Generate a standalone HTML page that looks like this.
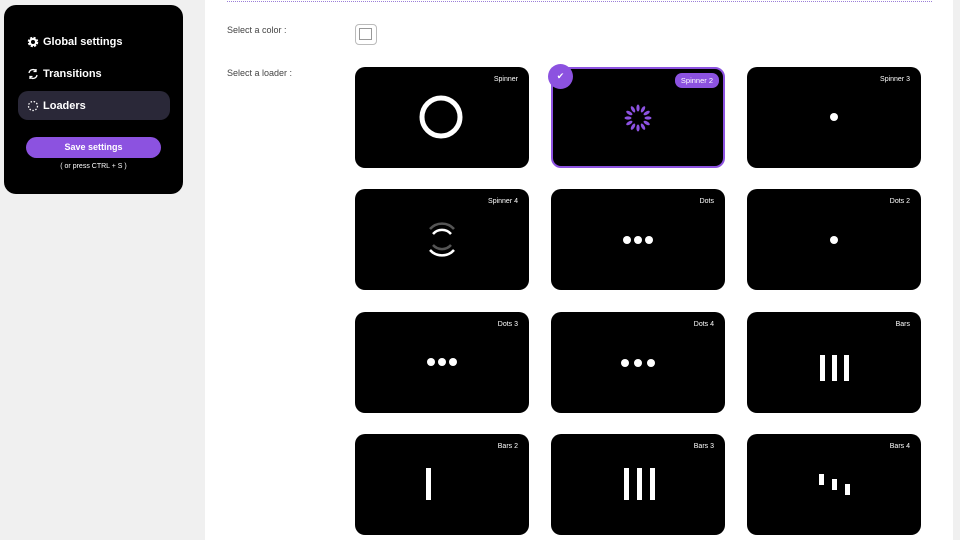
<!DOCTYPE html>
<html><head><meta charset="utf-8"><style>
*{margin:0;padding:0;box-sizing:border-box}
body{width:960px;height:540px;background:#f0f0f0;font-family:"Liberation Sans",sans-serif;position:relative;overflow:hidden}
.side{position:absolute;left:4px;top:5px;width:179px;height:189px;background:#000;border-radius:12px;color:#fff}
.item{position:absolute;left:14px;width:152px;height:29px;border-radius:10px;font-weight:bold;font-size:11px;line-height:30px;padding-left:25px}
.item svg{position:absolute;left:9px;top:9px}
.sel{background:#2a2838}
.btn{position:absolute;left:22px;top:132px;width:135px;height:21px;border-radius:11px;background:#8c52e0;font-size:9px;font-weight:bold;text-align:center;line-height:21px}
.hint{position:absolute;left:0;width:179px;top:158px;text-align:center;font-size:7px}
.main{position:absolute;left:205px;top:0;width:748px;height:540px;background:#fff}
.dl{position:absolute;left:22px;top:1px;width:705px;border-top:1px dotted #9b7fd8}
.lbl{position:absolute;left:22px;font-size:9px;color:#444}
.sw{position:absolute;left:150px;top:24px;width:22px;height:21px;border:1.5px solid #bbb;border-radius:4px}
.sw div{position:absolute;left:3px;top:3px;width:13px;height:12px;border:1px solid #999}
.card{position:absolute;width:174px;height:101px;background:#000;border-radius:10px}
.t{position:absolute;right:11px;top:9px;font-size:7px;color:#fff}
.c{position:absolute;left:0;top:0}
</style></head><body>
<div class="side">
 <div class="item" style="top:22px"><svg width="12" height="12" viewBox="0 0 12 12"><circle cx="6" cy="6" r="4" fill="none" stroke="#fff" stroke-width="2.5" stroke-dasharray="2 1.2"/><circle cx="6" cy="6" r="3" fill="none" stroke="#fff" stroke-width="2"/></svg>Global settings</div>
 <div class="item" style="top:54px"><svg width="12" height="12" viewBox="0 0 12 12" fill="none" stroke="#fff" stroke-width="1.3"><path d="M2 5a4 4 0 0 1 7-2M10 7a4 4 0 0 1-7 2"/><path d="M9 1v2.5H6.5M3 11V8.5h2.5"/></svg>Transitions</div>
 <div class="item sel" style="top:86px"><svg width="12" height="12" viewBox="0 0 12 12" fill="none" stroke="#fff" stroke-width="1.3" stroke-dasharray="1.5 1.6"><circle cx="6" cy="6" r="4.5"/></svg>Loaders</div>
 <div class="btn">Save settings</div>
 <div class="hint">( or press CTRL + S )</div>
</div>
<div class="main">
 <div class="dl"></div>
 <div class="lbl" style="top:25px">Select a color :</div>
 <div class="sw"><div></div></div>
 <div class="lbl" style="top:68px">Select a loader :</div>

 <div class="card" style="left:150px;top:67px"><span class="t">Spinner</span><svg class="c" width="174" height="101"><circle cx="86" cy="50" r="19" fill="none" stroke="#fff" stroke-width="5"/></svg></div>
 <div class="card" style="left:346px;top:67px;border:2.5px solid #8c52e0"><span style="position:absolute;right:4px;top:4px;background:#8c52e0;color:#fff;font-size:7.5px;padding:3px 6px;border-radius:7px">Spinner 2</span><svg class="c" width="170" height="97" style="left:-1px;top:-3px"><g fill="#8c52e0" transform="translate(86,52)"><ellipse rx="1.6" ry="3.5" cy="-10"/><ellipse rx="1.6" ry="3.5" cy="-10" transform="rotate(30)"/><ellipse rx="1.6" ry="3.5" cy="-10" transform="rotate(60)"/><ellipse rx="1.6" ry="3.5" cy="-10" transform="rotate(90)"/><ellipse rx="1.6" ry="3.5" cy="-10" transform="rotate(120)"/><ellipse rx="1.6" ry="3.5" cy="-10" transform="rotate(150)"/><ellipse rx="1.6" ry="3.5" cy="-10" transform="rotate(180)"/><ellipse rx="1.6" ry="3.5" cy="-10" transform="rotate(210)"/><ellipse rx="1.6" ry="3.5" cy="-10" transform="rotate(240)"/><ellipse rx="1.6" ry="3.5" cy="-10" transform="rotate(270)"/><ellipse rx="1.6" ry="3.5" cy="-10" transform="rotate(300)"/><ellipse rx="1.6" ry="3.5" cy="-10" transform="rotate(330)"/></g></svg></div>
 <div style="position:absolute;left:343px;top:64px;width:25px;height:25px;border-radius:50%;background:#8c52e0;color:#fff;font-size:9px;text-align:center;line-height:25px">✔</div>
 <div class="card" style="left:542px;top:67px"><span class="t">Spinner 3</span><svg class="c" width="174" height="101"><circle cx="87" cy="50" r="4" fill="#fff"/></svg></div>

 <div class="card" style="left:150px;top:189px"><span class="t">Spinner 4</span><svg class="c" width="174" height="101" fill="none" stroke-width="2.5"><path d="M75 40a16 16 0 0 1 24 0" stroke="#555"/><path d="M78 45a12 12 0 0 1 18 0" stroke="#fff"/><path d="M78 56a12 12 0 0 0 18 0" stroke="#555"/><path d="M75 61a16 16 0 0 0 24 0" stroke="#fff"/></svg></div>
 <div class="card" style="left:346px;top:189px"><span class="t">Dots</span><svg class="c" width="174" height="101"><g fill="#fff"><circle cx="76" cy="51" r="4"/><circle cx="87" cy="51" r="4"/><circle cx="98" cy="51" r="4"/></g></svg></div>
 <div class="card" style="left:542px;top:189px"><span class="t">Dots 2</span><svg class="c" width="174" height="101"><circle cx="87" cy="51" r="4" fill="#fff"/></svg></div>

 <div class="card" style="left:150px;top:312px"><span class="t">Dots 3</span><svg class="c" width="174" height="101"><g fill="#fff"><circle cx="76" cy="50" r="4"/><circle cx="87" cy="50" r="4"/><circle cx="98" cy="50" r="4"/></g></svg></div>
 <div class="card" style="left:346px;top:312px"><span class="t">Dots 4</span><svg class="c" width="174" height="101"><g fill="#fff"><circle cx="74" cy="51" r="4"/><circle cx="87" cy="51" r="4"/><circle cx="100" cy="51" r="4"/></g></svg></div>
 <div class="card" style="left:542px;top:312px"><span class="t">Bars</span><svg class="c" width="174" height="101"><g fill="#fff"><rect x="73" y="43" width="5" height="26"/><rect x="85" y="43" width="5" height="26"/><rect x="97" y="43" width="5" height="26"/></g></svg></div>

 <div class="card" style="left:150px;top:434px"><span class="t">Bars 2</span><svg class="c" width="174" height="101"><rect x="71" y="34" width="5" height="32" fill="#fff"/></svg></div>
 <div class="card" style="left:346px;top:434px"><span class="t">Bars 3</span><svg class="c" width="174" height="101"><g fill="#fff"><rect x="73" y="34" width="5" height="32"/><rect x="86" y="34" width="5" height="32"/><rect x="99" y="34" width="5" height="32"/></g></svg></div>
 <div class="card" style="left:542px;top:434px"><span class="t">Bars 4</span><svg class="c" width="174" height="101"><g fill="#fff"><rect x="72" y="40" width="5" height="11"/><rect x="85" y="45" width="5" height="11"/><rect x="98" y="50" width="5" height="11"/></g></svg></div>
</div>
</body></html>
